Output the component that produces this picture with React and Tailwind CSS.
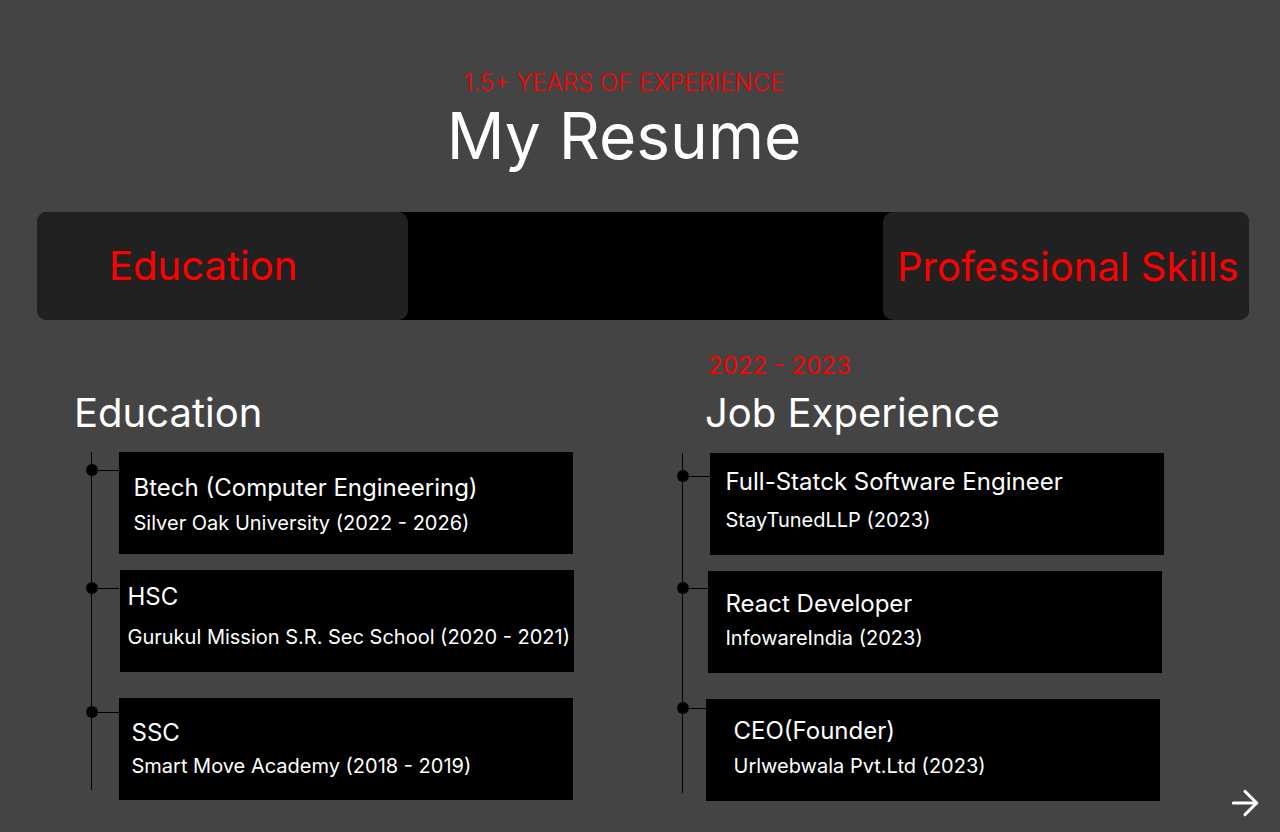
import React from 'react';
import { ArrowRight } from 'lucide-react';

const education = [
  { title: 'Btech (Computer Engineering)', sub: 'Silver Oak University (2022 - 2026)', row: 'mb-[16px]', dot: 'mt-[12px]', card: 'ml-0 pl-[15px] pt-[21px]', gap: 'mt-[7px]' },
  { title: 'HSC', sub: 'Gurukul Mission S.R. Sec School (2020 - 2021)', row: 'mb-[26px]', dot: 'mt-[12px]', card: 'ml-px pl-[8px] pt-[12px]', gap: 'mt-[12px]' },
  { title: 'SSC', sub: 'Smart Move Academy (2018 - 2019)', row: '-mb-[10px]', dot: 'mt-[8px]', card: 'ml-0 pl-[13px] pt-[20px]', gap: 'mt-[5px]' },
];

const jobs = [
  { title: 'Full-Statck Software Engineer', sub: 'StayTunedLLP (2023)', row: 'mb-[16px]', dot: 'mt-[17px]', card: 'ml-0 pl-[16px] pt-[14px]', gap: 'mt-[10px]' },
  { title: 'React Developer', sub: 'InfowareIndia (2023)', row: 'mb-[26px]', dot: 'mt-[11px]', card: '-ml-[2px] pl-[18px] pt-[18px]', gap: 'mt-[6px]' },
  { title: 'CEO(Founder)', sub: 'Urlwebwala Pvt.Ltd (2023)', row: '-mb-[8px]', dot: 'mt-[3px]', card: '-ml-[4px] pl-[28px] pt-[17px]', gap: 'mt-[7px]' },
];

const Timeline = ({ items, className }) => (
  <div className={`flex flex-col items-start ${className}`}>
    {items.map((item) => (
      <div key={item.title} className={`flex items-start ${item.row}`}>
        <div className={`-ml-[6.5px] flex items-center ${item.dot}`}>
          <span className="w-3 h-3 rounded-full bg-black" />
          <span className="h-px w-[21px] bg-black" />
        </div>
        <div className={`w-[454px] h-[102px] bg-black text-white ${item.card}`}>
          <p className="text-[24px] leading-[30px]">{item.title}</p>
          <p className={`text-[20px] leading-[26px] ${item.gap}`}>{item.sub}</p>
        </div>
      </div>
    ))}
  </div>
);

const App = () => {
  return (
    <div className="relative min-h-screen bg-[#444444] overflow-hidden" style={{ fontFamily: 'Inter, "Noto Sans", sans-serif' }}>
      <header className="pt-[69px] pr-[32px] text-center">
        <p className="text-[24px] leading-[28px] font-light text-[#ff0000]">1.5+ YEARS OF EXPERIENCE</p>
        <h1 className="text-[64px] leading-[64px] text-white mt-[7px]">My Resume</h1>
      </header>

      <div className="mt-[44px] ml-[37px] w-[1212px] h-[108px] bg-black rounded-[10px] flex justify-between">
        <button className="w-[371px] h-full bg-[#212121] rounded-[10px] text-left pl-[72px] text-[40px] text-[#ff0000]">
          Education
        </button>
        <button className="w-[366px] h-full bg-[#212121] rounded-[10px] text-left pl-[14px] pt-[2px] text-[40px] text-[#ff0000]">
          Professional Skills
        </button>
      </div>

      <div className="flex mt-[31px]">
        <div className="w-[703px] pl-[74px]">
          <h2 className="mt-[38px] text-[40px] leading-[48px] text-white">Education</h2>
          <Timeline items={education} className="mt-[15px] ml-[17px] border-l border-black" />
        </div>
        <div className="pl-[2px]">
          <p className="text-[24px] leading-[30px] text-[#ff0000] pl-[3px] mb-[8px]">2022 - 2023</p>
          <h2 className="text-[40px] leading-[48px] text-white">Job Experience</h2>
          <Timeline items={jobs} className="mt-[16px] ml-[-23px] border-l border-black" />
        </div>
      </div>

      <ArrowRight className="absolute right-[15px] bottom-[9px] text-white" size={40} strokeWidth={1.8} />
    </div>
  );
};

export default App;
